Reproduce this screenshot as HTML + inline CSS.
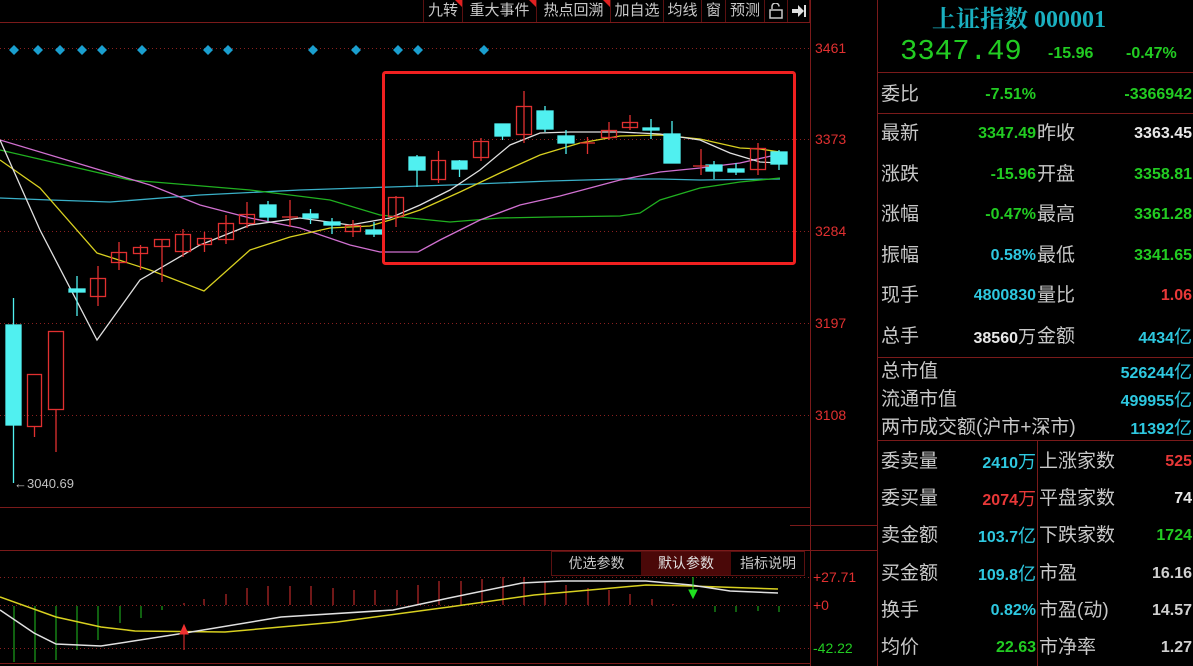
<!DOCTYPE html>
<html><head><meta charset="utf-8"><style>
*{margin:0;padding:0;box-sizing:border-box}
body{width:1193px;height:666px;background:#000;overflow:hidden;position:relative;font-family:"Liberation Sans","Noto Sans CJK SC",sans-serif}
.t{position:absolute;white-space:nowrap}
.lb{color:#c8c8c8;font-size:19px;line-height:22px}
.v{font-weight:bold;font-size:16px;line-height:22px;text-align:right}
.g{color:#22cc22}.c{color:#2ec8e0}.r{color:#e83838}.w{color:#e8e8e8}
.btn{position:absolute;top:0;height:22px;color:#c8c8c8;font-size:15px;line-height:22px;text-align:center;border-right:1px solid #5a1010}
.tri{position:absolute;top:0;right:0;width:0;height:0;border-top:7px solid #e02020;border-left:7px solid transparent}
.hl{position:absolute;height:1px;background:#7a1a1a}
</style></head><body>
<svg width="1193" height="666" style="position:absolute;left:0;top:0">
<g stroke="#7a1a1a" stroke-width="1" fill="none">
<line x1="0" y1="22.5" x2="810" y2="22.5"/>
<line x1="810.5" y1="0" x2="810.5" y2="666"/>
<line x1="0" y1="507.5" x2="810" y2="507.5"/>
<line x1="790" y1="525.5" x2="877" y2="525.5"/>
<line x1="0" y1="550.5" x2="877" y2="550.5"/>
<line x1="0" y1="663.5" x2="810" y2="663.5"/>
<line x1="877.5" y1="0" x2="877.5" y2="666"/>
</g>
<g stroke="#8a2020" stroke-dasharray="1,3" stroke-width="1">
<line x1="0" y1="48.5" x2="810" y2="48.5"/><line x1="0" y1="139.5" x2="810" y2="139.5"/>
<line x1="0" y1="231.5" x2="810" y2="231.5"/><line x1="0" y1="323.5" x2="810" y2="323.5"/>
<line x1="0" y1="415.5" x2="810" y2="415.5"/>
<line x1="0" y1="577.5" x2="810" y2="577.5"/><line x1="0" y1="605.5" x2="810" y2="605.5"/>
<line x1="0" y1="648.5" x2="810" y2="648.5"/>
</g>
<g fill="#e03030" font-size="14" font-family="Liberation Sans">
<text x="815" y="53">3461</text><text x="815" y="144">3373</text><text x="815" y="236">3284</text>
<text x="815" y="328">3197</text><text x="815" y="420">3108</text>
<text x="813" y="582">+27.71</text><text x="813" y="610">+0</text>
</g>
<text x="813" y="653" fill="#22cc22" font-size="14">-42.22</text>
<g fill="#1a9fcf">
<path d="M14 45l5 5-5 5-5-5z"/><path d="M38 45l5 5-5 5-5-5z"/><path d="M60 45l5 5-5 5-5-5z"/><path d="M82 45l5 5-5 5-5-5z"/><path d="M102 45l5 5-5 5-5-5z"/><path d="M142 45l5 5-5 5-5-5z"/><path d="M208 45l5 5-5 5-5-5z"/><path d="M228 45l5 5-5 5-5-5z"/><path d="M313 45l5 5-5 5-5-5z"/><path d="M356 45l5 5-5 5-5-5z"/><path d="M398 45l5 5-5 5-5-5z"/><path d="M418 45l5 5-5 5-5-5z"/><path d="M484 45l5 5-5 5-5-5z"/>
</g>
<!-- MA lines -->
<g fill="none" stroke-width="1.3">
<polyline stroke="#3ab0c8" points="0,198 50,200 110,202 200,195 300,190 390,187 450,185 550,181 620,179 660,179 700,180 780,179"/>
<polyline stroke="#20b020" points="0,150 130,180 250,190 330,200 380,215 420,219 450,222 500,218 550,217 620,216 640,213 660,200 700,188 740,182 780,178"/>
<polyline stroke="#d070d0" points="0,140 100,170 150,185 200,205 250,218 300,228 350,245 380,252 418,252 440,240 480,220 520,205 560,196 620,180 660,172 700,168 740,163 780,154"/>
<polyline stroke="#d8d020" points="0,160 40,188 97,253 150,270 204,291 250,250 290,237 330,228 370,226 390,220 420,210 460,192 500,173 540,155 580,143 620,136 660,135 700,139 740,148 760,149 780,152"/>
<polyline stroke="#e0e0e0" points="0,140 40,230 97,340 140,280 200,245 250,225 300,218 350,225 390,218 420,205 450,190 480,170 510,145 540,133 570,132 620,132 660,134 700,140 730,153 760,162 780,163"/>
</g>
<!-- candles -->
<g stroke-width="1.3">
<g stroke="#50f0f0" fill="#50f0f0">
<line x1="13.5" y1="298" x2="13.5" y2="483"/><rect x="6" y="325" width="15" height="100"/>
<line x1="77" y1="276" x2="77" y2="316"/><rect x="69" y="289" width="16" height="3"/>
<line x1="268" y1="201" x2="268" y2="221"/><rect x="260" y="205" width="16" height="12"/>
<line x1="310.5" y1="209" x2="310.5" y2="224"/><rect x="303" y="214" width="15" height="4"/>
<line x1="332" y1="218" x2="332" y2="234"/><rect x="324" y="222" width="16" height="3"/>
<line x1="374" y1="222" x2="374" y2="237"/><rect x="366" y="230" width="16" height="4"/>
<line x1="417" y1="155" x2="417" y2="187"/><rect x="409" y="157" width="16" height="13"/>
<line x1="459.5" y1="160" x2="459.5" y2="177"/><rect x="452" y="161" width="15" height="8"/>
<line x1="502.5" y1="124" x2="502.5" y2="140"/><rect x="495" y="124" width="15" height="12"/>
<line x1="545" y1="106" x2="545" y2="132"/><rect x="537" y="111" width="16" height="18"/>
<line x1="566" y1="130" x2="566" y2="154"/><rect x="558" y="136" width="16" height="7"/>
<line x1="651" y1="119" x2="651" y2="139"/><rect x="643" y="128" width="16" height="2"/>
<line x1="672" y1="121" x2="672" y2="163"/><rect x="664" y="134" width="16" height="29"/>
<line x1="714" y1="161" x2="714" y2="179"/><rect x="706" y="165" width="16" height="6"/>
<line x1="736" y1="163" x2="736" y2="175"/><rect x="728" y="169" width="16" height="3"/>
<line x1="779" y1="150" x2="779" y2="170"/><rect x="771" y="152" width="16" height="12"/>
</g>
<g stroke="#e03030" fill="none">
<line x1="34.5" y1="427" x2="34.5" y2="437"/><rect x="27.5" y="374.5" width="14" height="52"/>
<line x1="56" y1="410" x2="56" y2="452"/><rect x="48.5" y="331.5" width="15" height="78"/>
<line x1="98" y1="266" x2="98" y2="306"/><rect x="90.5" y="278.5" width="15" height="18"/>
<line x1="119" y1="242" x2="119" y2="270"/><rect x="111.5" y="252.5" width="15" height="10"/>
<line x1="140.5" y1="245" x2="140.5" y2="270"/><rect x="133.5" y="247.5" width="14" height="6"/>
<line x1="162" y1="239" x2="162" y2="282"/><rect x="154.5" y="239.5" width="15" height="7"/>
<line x1="183" y1="229" x2="183" y2="257"/><rect x="175.5" y="234.5" width="15" height="17"/>
<line x1="204.5" y1="232" x2="204.5" y2="252"/><rect x="197.5" y="238.5" width="14" height="6"/>
<line x1="226" y1="215" x2="226" y2="244"/><rect x="218.5" y="223.5" width="15" height="16"/>
<line x1="247" y1="202" x2="247" y2="228"/><rect x="239.5" y="214.5" width="15" height="9"/>
<line x1="290" y1="200" x2="290" y2="227"/><line x1="282" y1="217" x2="298" y2="217"/>
<line x1="353" y1="220" x2="353" y2="237"/><rect x="345.5" y="225.5" width="15" height="6"/>
<line x1="396" y1="196" x2="396" y2="227"/><rect x="388.5" y="197.5" width="15" height="19"/>
<line x1="438.5" y1="151" x2="438.5" y2="183"/><rect x="431.5" y="160.5" width="14" height="19"/>
<line x1="481" y1="138" x2="481" y2="161"/><rect x="473.5" y="141.5" width="15" height="16"/>
<line x1="524" y1="91" x2="524" y2="143"/><rect x="516.5" y="106.5" width="15" height="28"/>
<line x1="587.5" y1="137" x2="587.5" y2="154"/><line x1="580" y1="143" x2="595" y2="143"/>
<line x1="609" y1="122" x2="609" y2="140"/><rect x="601.5" y="130.5" width="15" height="7"/>
<line x1="630" y1="115" x2="630" y2="130"/><rect x="622.5" y="122.5" width="15" height="5"/>
<line x1="701" y1="149" x2="701" y2="175"/><line x1="693" y1="166" x2="709" y2="166"/>
<line x1="758" y1="143" x2="758" y2="175"/><rect x="750.5" y="148.5" width="15" height="21"/>
</g>
</g>
<text x="14" y="488" fill="#c0c0c0" font-size="13">←3040.69</text>
<rect x="383.5" y="72.5" width="411" height="191" fill="none" stroke="#f02020" stroke-width="3" rx="2"/>
<!-- MACD -->
<g stroke="#e03030" stroke-width="1">
<line x1="184" y1="605" x2="184" y2="603"/><line x1="204" y1="605" x2="204" y2="599"/><line x1="226" y1="605" x2="226" y2="594"/><line x1="247" y1="605" x2="247" y2="588"/><line x1="268" y1="605" x2="268" y2="586"/><line x1="290" y1="605" x2="290" y2="586"/><line x1="311" y1="605" x2="311" y2="586"/><line x1="333" y1="605" x2="333" y2="588"/><line x1="354" y1="605" x2="354" y2="590"/><line x1="375" y1="605" x2="375" y2="590"/><line x1="397" y1="605" x2="397" y2="590"/><line x1="418" y1="605" x2="418" y2="585"/><line x1="439" y1="605" x2="439" y2="581"/><line x1="461" y1="605" x2="461" y2="581"/><line x1="482" y1="605" x2="482" y2="579"/><line x1="503" y1="605" x2="503" y2="577"/><line x1="524" y1="605" x2="524" y2="577"/><line x1="545" y1="605" x2="545" y2="582"/><line x1="566" y1="605" x2="566" y2="585"/><line x1="588" y1="605" x2="588" y2="588"/><line x1="609" y1="605" x2="609" y2="590"/><line x1="630" y1="605" x2="630" y2="594"/><line x1="652" y1="605" x2="652" y2="599"/><line x1="673" y1="605" x2="673" y2="604"/>
</g>
<g stroke="#20c020" stroke-width="1">
<line x1="14" y1="606" x2="14" y2="662"/><line x1="35" y1="606" x2="35" y2="662"/><line x1="56" y1="606" x2="56" y2="660"/><line x1="77" y1="606" x2="77" y2="650"/><line x1="98" y1="606" x2="98" y2="640"/><line x1="120" y1="606" x2="120" y2="623"/><line x1="141" y1="606" x2="141" y2="618"/><line x1="162" y1="606" x2="162" y2="610"/>
<line x1="715" y1="606" x2="715" y2="612"/><line x1="736" y1="606" x2="736" y2="612"/><line x1="758" y1="606" x2="758" y2="611"/><line x1="779" y1="606" x2="779" y2="612"/>
</g>
<polyline fill="none" stroke="#d8d020" stroke-width="1.5" points="0,597 56,617 101,627 135,631 225,632 337,622 449,607 534,595 646,585 691,586 778,589"/>
<polyline fill="none" stroke="#e0e0e0" stroke-width="1.5" points="0,610 34,633 56,644 101,646 185,633 281,617 393,610 449,598 522,583 562,581 646,581 691,585 730,591 778,593"/>
<path d="M184 650v-16h-4l4-9 4 9h-4z" fill="#f03030" stroke="#f03030"/>
<path d="M693 577v13h-4l4 8 4-8h-4z" fill="#20e020" stroke="#20e020"/>
<!-- right panel lines -->
<g stroke="#7a1a1a">
<line x1="877" y1="72.5" x2="1193" y2="72.5"/><line x1="877" y1="113.5" x2="1193" y2="113.5"/>
<line x1="877" y1="357.5" x2="1193" y2="357.5"/><line x1="877" y1="440.5" x2="1193" y2="440.5"/>
<line x1="1037.5" y1="440" x2="1037.5" y2="666"/>
</g>
</svg>

<!-- toolbar -->
<div class="btn" style="left:423px;width:40px;border-left:1px solid #5a1010">九转<span class="tri"></span></div>
<div class="btn" style="left:463px;width:74px">重大事件<span class="tri"></span></div>
<div class="btn" style="left:537px;width:74px">热点回溯<span class="tri"></span></div>
<div class="btn" style="left:611px;width:53px">加自选</div>
<div class="btn" style="left:664px;width:38px">均线</div>
<div class="btn" style="left:702px;width:24px">窗</div>
<div class="btn" style="left:726px;width:39px">预测</div>
<div class="btn" style="left:765px;width:23px"><svg width="14" height="16" style="margin-top:3px"><path d="M3 6V3.5a3.5 3.5 0 0 1 7 0" stroke="#c8c8c8" stroke-width="1.5" fill="none"/><rect x="1" y="7" width="12" height="8" fill="none" stroke="#c8c8c8" stroke-width="1.5"/></svg></div>
<div class="btn" style="left:788px;width:22px"><svg width="16" height="14" style="margin-top:4px"><path d="M1 5h6V1l6 6-6 6V9H1z" fill="#e0e0e0"/><rect x="13" y="1" width="2" height="12" fill="#e0e0e0"/></svg></div>

<!-- MACD buttons -->
<div class="t" style="left:551px;top:551px;width:254px;height:25px;border:1px solid #5a1010;font-size:14px;line-height:23px;color:#c8c8c8">
<span style="position:absolute;left:0;width:89px;text-align:center">优选参数</span>
<span style="position:absolute;left:89px;width:90px;text-align:center;background:#4a0808;color:#e0e0e0;height:23px">默认参数</span>
<span style="position:absolute;left:179px;width:74px;text-align:center">指标说明</span>
</div>

<!-- right panel -->
<div class="t" style="left:932px;top:-1px;font-family:'Noto Serif CJK SC','Liberation Serif',serif;font-size:24px;font-weight:bold;color:#1ab0c0">上证指数 <span style="font-family:'Liberation Serif',serif">000001</span></div>
<div class="t g" style="left:900px;top:35px;font-size:29px;font-family:'Liberation Mono',monospace;line-height:34px">3347.49</div>
<div class="t g" style="left:1048px;top:45px;font-size:16px;font-weight:bold">-15.96</div>
<div class="t g" style="left:1126px;top:45px;font-size:16px;font-weight:bold">-0.47%</div>

<div class="t lb" style="left:881px;top:84px">委比</div>
<div class="t v g" style="left:960px;top:84px;width:76px">-7.51%</div>
<div class="t v g" style="left:1090px;top:84px;width:102px">-3366942</div>

<div class="t lb" style="left:881px;top:123px">最新</div><div class="t v g" style="left:940px;top:123px;width:96px">3347.49</div>
<div class="t lb" style="left:1037px;top:123px">昨收</div><div class="t v w" style="left:1100px;top:123px;width:92px">3363.45</div>
<div class="t lb" style="left:881px;top:164px">涨跌</div><div class="t v g" style="left:940px;top:164px;width:96px">-15.96</div>
<div class="t lb" style="left:1037px;top:164px">开盘</div><div class="t v g" style="left:1100px;top:164px;width:92px">3358.81</div>
<div class="t lb" style="left:881px;top:204px">涨幅</div><div class="t v g" style="left:940px;top:204px;width:96px">-0.47%</div>
<div class="t lb" style="left:1037px;top:204px">最高</div><div class="t v g" style="left:1100px;top:204px;width:92px">3361.28</div>
<div class="t lb" style="left:881px;top:245px">振幅</div><div class="t v c" style="left:940px;top:245px;width:96px">0.58%</div>
<div class="t lb" style="left:1037px;top:245px">最低</div><div class="t v g" style="left:1100px;top:245px;width:92px">3341.65</div>
<div class="t lb" style="left:881px;top:285px">现手</div><div class="t v c" style="left:940px;top:285px;width:96px">4800830</div>
<div class="t lb" style="left:1037px;top:285px">量比</div><div class="t v r" style="left:1100px;top:285px;width:92px">1.06</div>
<div class="t lb" style="left:881px;top:326px">总手</div><div class="t v w" style="left:940px;top:326px;width:96px">38560<span style="font-weight:normal;font-size:18px;color:#c8c8c8">万</span></div>
<div class="t lb" style="left:1037px;top:326px">金额</div><div class="t v c" style="left:1100px;top:326px;width:92px">4434<span style="font-weight:normal;font-size:18px">亿</span></div>

<div class="t lb" style="left:881px;top:361px">总市值</div><div class="t v c" style="left:1080px;top:361px;width:112px">526244<span style="font-weight:normal;font-size:18px">亿</span></div>
<div class="t lb" style="left:881px;top:389px">流通市值</div><div class="t v c" style="left:1080px;top:389px;width:112px">499955<span style="font-weight:normal;font-size:18px">亿</span></div>
<div class="t lb" style="left:881px;top:417px">两市成交额(沪市+深市)</div><div class="t v c" style="left:1080px;top:417px;width:112px">11392<span style="font-weight:normal;font-size:18px">亿</span></div>

<div class="t lb" style="left:881px;top:451px">委卖量</div><div class="t v c" style="left:940px;top:451px;width:96px">2410<span style="font-weight:normal;font-size:18px">万</span></div>
<div class="t lb" style="left:1039px;top:451px">上涨家数</div><div class="t v r" style="left:1100px;top:451px;width:92px">525</div>
<div class="t lb" style="left:881px;top:488px">委买量</div><div class="t v r" style="left:940px;top:488px;width:96px">2074<span style="font-weight:normal;font-size:18px">万</span></div>
<div class="t lb" style="left:1039px;top:488px">平盘家数</div><div class="t v w" style="left:1100px;top:488px;width:92px">74</div>
<div class="t lb" style="left:881px;top:525px">卖金额</div><div class="t v c" style="left:940px;top:525px;width:96px">103.7<span style="font-weight:normal;font-size:18px">亿</span></div>
<div class="t lb" style="left:1039px;top:525px">下跌家数</div><div class="t v g" style="left:1100px;top:525px;width:92px">1724</div>
<div class="t lb" style="left:881px;top:563px">买金额</div><div class="t v c" style="left:940px;top:563px;width:96px">109.8<span style="font-weight:normal;font-size:18px">亿</span></div>
<div class="t lb" style="left:1039px;top:563px">市盈</div><div class="t v w" style="left:1100px;top:563px;width:92px;color:#d0d0d0">16.16</div>
<div class="t lb" style="left:881px;top:600px">换手</div><div class="t v c" style="left:940px;top:600px;width:96px">0.82%</div>
<div class="t lb" style="left:1039px;top:600px">市盈(动)</div><div class="t v w" style="left:1100px;top:600px;width:92px;color:#d0d0d0">14.57</div>
<div class="t lb" style="left:881px;top:637px">均价</div><div class="t v g" style="left:940px;top:637px;width:96px">22.63</div>
<div class="t lb" style="left:1039px;top:637px">市净率</div><div class="t v w" style="left:1100px;top:637px;width:92px;color:#d0d0d0">1.27</div>
</body></html>
